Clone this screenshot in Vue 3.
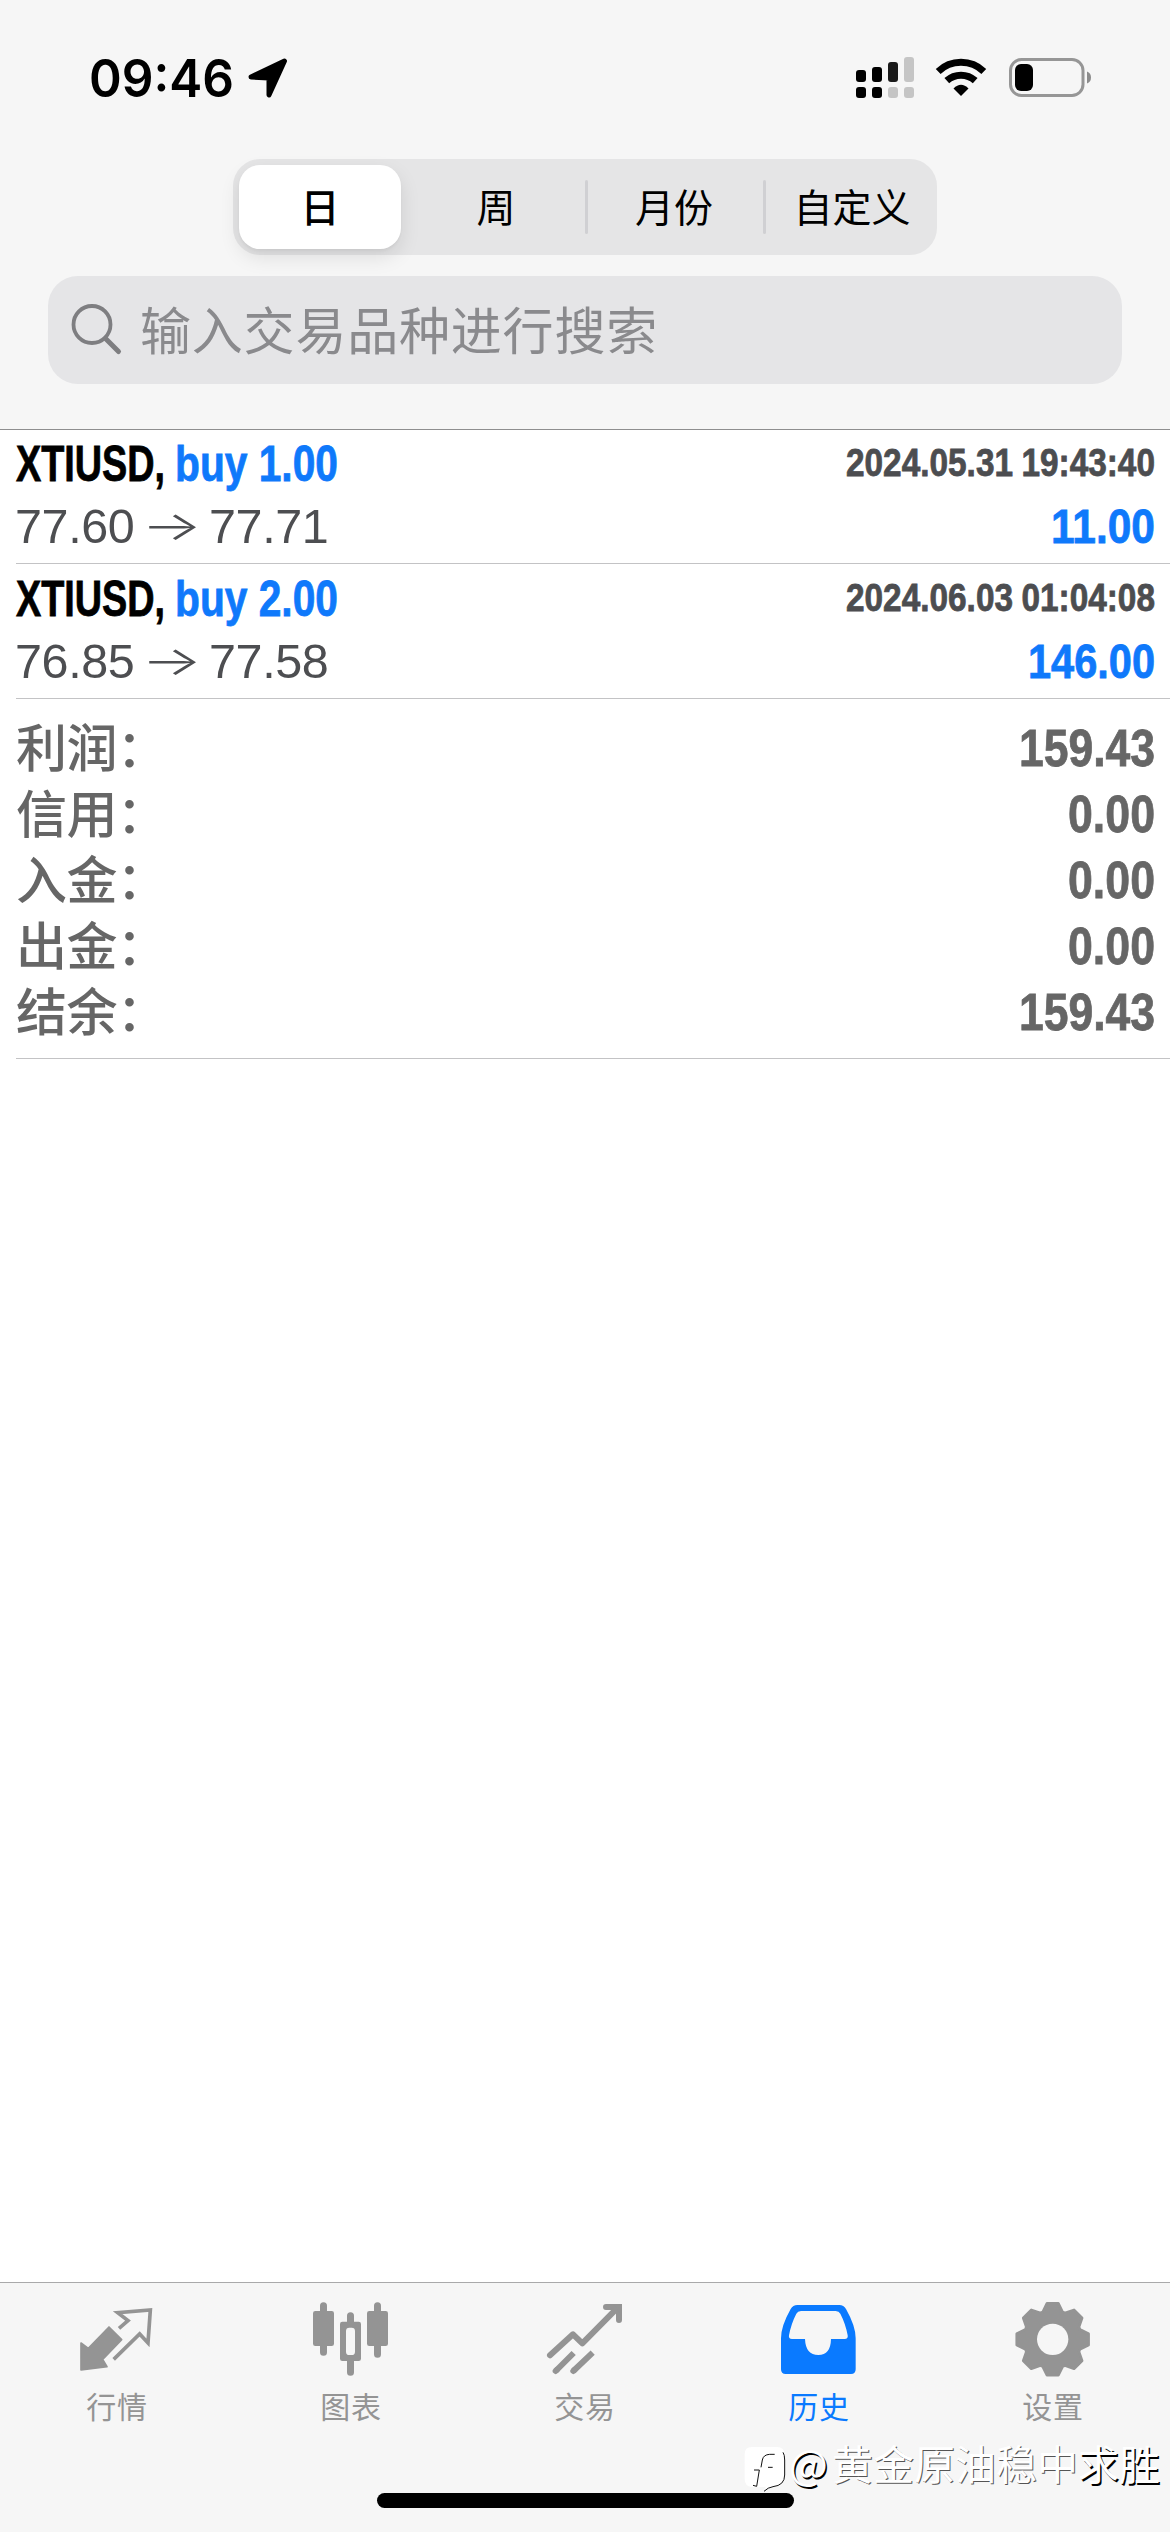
<script setup>
const periods = ['日', '周', '月份', '自定义']

const trades = [
  { symbol: 'XTIUSD,', side: 'buy 1.00', time: '2024.05.31 19:43:40', open: '77.60', close: '77.71', profit: '11.00', profitWidth: 104 },
  { symbol: 'XTIUSD,', side: 'buy 2.00', time: '2024.06.03 01:04:08', open: '76.85', close: '77.58', profit: '146.00', profitWidth: 127 },
]

const totals = [
  { label: '利润：', value: '159.43', width: 136 },
  { label: '信用：', value: '0.00', width: 87 },
  { label: '入金：', value: '0.00', width: 87 },
  { label: '出金：', value: '0.00', width: 87 },
  { label: '结余：', value: '159.43', width: 136 },
]

const polar = (radius, degrees) => {
  const a = (degrees * Math.PI) / 180
  return `${(338 + radius * Math.sin(a)).toFixed(1)},${(208 - radius * Math.cos(a)).toFixed(1)}`
}
const gearPoints = Array.from({ length: 8 }, (_, i) => i * 45)
  .flatMap((c) => [polar(87, c - 20), polar(109, c - 9), polar(109, c + 9), polar(87, c + 20)])
  .join(' ')
</script>

<template>
  <div class="screen">
    <header class="header">
      <div class="status">
        <svg class="clock" width="150" height="54" viewBox="0 50 150 54">
          <text x="0" y="96.500" textLength="145" lengthAdjust="spacingAndGlyphs">09:46</text>
        </svg>
        <svg class="location" width="42" height="54" viewBox="247 50 42 54">
          <path d="M251 77 L284.500 61 L269 95 V78 Z" fill="#000" stroke="#000" stroke-width="5" stroke-linejoin="round" />
        </svg>
        <svg class="signal" width="60" height="54" viewBox="855 50 60 54">
          <rect x="856" y="70" width="10" height="12" rx="3" />
          <rect x="872" y="67" width="10" height="15" rx="3" />
          <rect x="888" y="62" width="10" height="20" rx="3" fill="#1a1a1a" />
          <rect x="904" y="57" width="10" height="25" rx="3" fill="#c5c5c5" />
          <rect x="856" y="87" width="10" height="11" rx="3" />
          <rect x="872" y="87" width="10" height="11" rx="3" />
          <rect x="888" y="87" width="10" height="11" rx="3" fill="#c5c5c5" />
          <rect x="904" y="87" width="10" height="11" rx="3" fill="#c5c5c5" />
        </svg>
        <svg class="wifi" width="52" height="54" viewBox="935.5 50 52 54">
          <path d="M938.700 71.500 A33 33 0 0 1 984.300 71.500" fill="none" stroke="#000" stroke-width="7" />
          <path d="M947.300 80.700 A21 21 0 0 1 975.700 80.700" fill="none" stroke="#000" stroke-width="7" />
          <path d="M961.500 96 L954 88.500 Q961.500 81 969 88.500 Z" />
        </svg>
        <svg class="battery" width="84" height="54" viewBox="1008 50 84 54">
          <rect x="1010.500" y="59.500" width="72.500" height="36" rx="11" fill="none" stroke="#969696" stroke-width="3" />
          <rect x="1015" y="64" width="18" height="27" rx="6" />
          <path d="M1087 71.500 Q1091 73 1091 77.500 T1087 83.500 Z" fill="#8c8c8c" />
        </svg>
      </div>

      <nav class="segments">
        <button v-for="(p, i) in periods" :key="p" class="segment" :class="{ active: i === 0, divided: i > 1 }">{{ p }}</button>
      </nav>

      <div class="search">
        <svg width="52" height="52" viewBox="71 305 52 52">
          <circle cx="92" cy="325.500" r="18.500" fill="none" stroke="#7e7e81" stroke-width="3.800" />
          <path d="M105.500 339.500 L118.500 352.500" stroke="#7e7e81" stroke-width="5" stroke-linecap="round" />
        </svg>
        <span>输入交易品种进行搜索</span>
      </div>
    </header>

    <main class="content">
      <article v-for="t in trades" :key="t.time" class="trade">
        <div class="line title">
          <svg width="322" height="67">
            <text class="symbol" x="0" y="50.500" textLength="149" lengthAdjust="spacingAndGlyphs">{{ t.symbol }}</text>
            <text class="side" x="159" y="50.500" textLength="163" lengthAdjust="spacingAndGlyphs">{{ t.side }}</text>
          </svg>
          <svg width="310" height="67">
            <text class="time" x="1" y="46" textLength="309" lengthAdjust="spacingAndGlyphs">{{ t.time }}</text>
          </svg>
        </div>
        <div class="line">
          <div class="prices"><span>{{ t.open }}</span><span class="arrow">→</span><span>{{ t.close }}</span></div>
          <svg :width="t.profitWidth" height="66">
            <text class="profit" x="0" y="46" :textLength="t.profitWidth" lengthAdjust="spacingAndGlyphs">{{ t.profit }}</text>
          </svg>
        </div>
      </article>

      <section class="totals">
        <div v-for="row in totals" :key="row.label" class="total">
          <span class="label">{{ row.label }}</span>
          <svg :width="row.width" height="66">
            <text class="value" x="0" y="50" :textLength="row.width" lengthAdjust="spacingAndGlyphs">{{ row.value }}</text>
          </svg>
        </div>
      </section>
    </main>

    <footer class="tabbar">
      <div class="tab">
        <svg width="90" height="84" viewBox="96 84 270 252">
          <path d="M123 219 L145 235 L207 171 L245 209 L188 268 L201 290 L123 300 Z" fill="currentColor" stroke="currentColor" stroke-width="5" stroke-linejoin="round" />
          <path d="M237 175 L264 152 L233 128 L331 120 L324 219 L299 192 L221 268" fill="none" stroke="currentColor" stroke-width="11" />
        </svg>
        <span>行情</span>
      </div>
      <div class="tab">
        <svg width="90" height="84" viewBox="798 84 270 252">
          <g stroke="currentColor" stroke-width="21" stroke-linecap="round">
            <path d="M850.500 107 V247 M931.500 137 V160 M931.500 268 V307 M1012.500 107 V253" />
          </g>
          <rect x="819" y="123" width="63" height="105" rx="7" fill="currentColor" />
          <rect x="981" y="123" width="63" height="105" rx="7" fill="currentColor" />
          <rect x="918" y="173" width="27" height="82" rx="9" fill="#f6f6f6" />
          <path fill="currentColor" fill-rule="evenodd" d="M907 155 H956 Q963 155 963 162 V266 Q963 273 956 273 H907 Q900 273 900 266 V162 Q900 155 907 155 Z M928 173 Q918 173 918 183 V245 Q918 255 928 255 H935 Q945 255 945 245 V183 Q945 173 935 173 Z" />
        </svg>
        <span>图表</span>
      </div>
      <div class="tab">
        <svg width="90" height="84" viewBox="120 84 270 252">
          <path d="M150 256 L219 193 L247 220 L353 113" fill="none" stroke="currentColor" stroke-width="18" stroke-linecap="round" stroke-linejoin="round" />
          <path d="M318 111 H357 V150" fill="none" stroke="currentColor" stroke-width="18" stroke-linecap="round" />
          <path d="M340 104 H362 V130 Z" fill="currentColor" />
          <path d="M167 303 L221 249 M220 303 L278 248" stroke="currentColor" stroke-width="18" />
          <path d="M167 303 L170 300 M220 303 L223 300" stroke="currentColor" stroke-width="18" stroke-linecap="round" />
        </svg>
        <span>交易</span>
      </div>
      <div class="tab current">
        <svg width="90" height="84" viewBox="822 84 270 252">
          <path fill="currentColor" fill-rule="evenodd" d="M892 105 H1018 Q1031 105 1038 117 Q1067 168 1067 205 V298 Q1067 312 1053 312 H857 Q843 312 843 298 V205 Q843 168 872 117 Q879 105 892 105 Z M903 123 Q893 123 889 131 Q873 162 867 196 Q865 207 876 207 H915 Q917 255 955 255 Q992 255 993 207 H1034 Q1045 207 1043 196 Q1037 162 1021 131 Q1017 123 1007 123 Z" />
        </svg>
        <span>历史</span>
      </div>
      <div class="tab">
        <svg width="90" height="84" viewBox="204 84 270 252">
          <polygon :points="gearPoints" fill="currentColor" stroke="currentColor" stroke-width="8" stroke-linejoin="round" />
          <circle cx="338" cy="208" r="47" fill="#f6f6f6" />
        </svg>
        <span>设置</span>
      </div>
    </footer>
    <div class="home"></div>

    <div class="watermark">
      <svg width="46" height="50" viewBox="70 75 138 150">
        <path d="M97 81 H172 Q195 81 195 106 V165 Q195 196 160 200 Q145 202 133 214 L138 201 H97 Q75 200 75 178 V103 Q75 81 97 81 Z" fill="#fff" />
        <path d="M190 97 Q195 104 195 120 V165 Q195 196 160 200 Q145 202 133 214 M165 103 H150 Q131 104 128 120 L124 142 M103 150 H119 M145 142 H159 M119 150 L111 199 L100 196" fill="none" stroke="#111" stroke-width="3" />
      </svg>
      <span class="at">@</span><span class="soft">黄金原油稳中</span><span class="strong">求胜</span>
    </div>
  </div>
</template>

<style>
body {
  margin: 0;
  background: #fff;
}
</style>

<style scoped>
.screen {
  position: relative;
  display: flex;
  flex-direction: column;
  width: 1170px;
  height: 2532px;
  overflow: hidden;
  background: #fff;
  font-family: "Liberation Sans", "Noto Sans CJK SC", sans-serif;
}
svg {
  display: block;
  flex: none;
  overflow: visible;
}
.header {
  box-sizing: border-box;
  height: 430px;
  background: #f6f6f6;
  border-bottom: 1px solid #8e8e8f;
}
.status {
  box-sizing: border-box;
  display: flex;
  height: 159px;
  padding: 50px 78px 0 89px;
}
.clock text {
  font: 600 52px Inter, sans-serif;
}
.location {
  margin-left: 8px;
}
.signal {
  margin-left: auto;
}
.wifi {
  margin-left: 20px;
}
.battery {
  margin-left: 21px;
}
.segments {
  box-sizing: border-box;
  display: flex;
  width: 704px;
  height: 96px;
  margin-left: 233px;
  padding: 6px 2px 6px 6px;
  border-radius: 27px;
  background: #e5e5e6;
}
.segment {
  position: relative;
  flex: 1;
  height: 84px;
  margin: 0 0 0 12px;
  padding: 0 0 5px;
  border: 0;
  border-radius: 21px;
  background: none;
  color: #000;
  font: 400 39px/78px "Noto Sans CJK SC", sans-serif;
}
.segment.active {
  flex: 0 0 162px;
  margin-left: 0;
  background: #fff;
  font-weight: 500;
  box-shadow: 0 8px 20px rgba(0, 0, 0, 0.1), 0 2px 3px rgba(0, 0, 0, 0.04);
}
.segment.divided::before {
  content: "";
  position: absolute;
  left: -6px;
  top: 15px;
  width: 3px;
  height: 54px;
  border-radius: 2px;
  background: #d0d0d3;
}
.search {
  box-sizing: border-box;
  display: flex;
  align-items: center;
  height: 108px;
  margin: 21px 48px 0;
  padding-left: 23px;
  border-radius: 30px;
  background: #e5e5e7;
  color: #8a8a8d;
  font: 400 51px/104px "Noto Sans CJK SC", sans-serif;
  letter-spacing: 0.8px;
}
.search span {
  height: 108px;
  margin-left: 17px;
}
.trade {
  box-sizing: border-box;
  height: 135px;
  margin-left: 16px;
  padding-right: 15px;
  border-bottom: 1px solid #c3c3c5;
}
.trade:first-child {
  height: 134px;
}
.line {
  display: flex;
  justify-content: space-between;
}
.trade + .trade .line.title {
  padding-top: 1px;
}
.symbol, .side, .time, .profit, .value {
  font: 700 50px "Liberation Sans", sans-serif;
  stroke-width: 0.8px;
}
.symbol {
  fill: #000;
  stroke: #000;
}
.side, .profit {
  fill: #0f79fb;
  stroke: #0f79fb;
}
.time {
  font-size: 39.500px;
  word-spacing: -1px;
  fill: #4c4d50;
  stroke: #4c4d50;
}
.profit {
  font-size: 49px;
}
.value {
  font-size: 52px;
  fill: #666;
  stroke: #666;
}
.prices {
  display: flex;
  height: 66px;
  color: #4d4e51;
  font-size: 48.500px;
  line-height: 58px;
  letter-spacing: -0.4px;
}
.prices span:first-child {
  width: 119px;
  margin-left: -1px;
}
.arrow {
  width: 75px;
  text-align: center;
  font-family: Inter, sans-serif;
  font-size: 40px;
  font-weight: 300;
  transform: scaleX(1.6);
}
.totals {
  box-sizing: border-box;
  height: 360px;
  margin-left: 16px;
  padding: 17px 15px 0 0;
  border-bottom: 1px solid #c3c3c5;
}
.total {
  display: flex;
  justify-content: space-between;
  height: 66px;
}
.label {
  color: #666;
  font: 500 51px/58px "Noto Sans CJK SC", sans-serif;
  letter-spacing: -0.6px;
}
.tabbar {
  box-sizing: border-box;
  display: flex;
  height: 250px;
  margin-top: auto;
  padding-top: 15px;
  border-top: 1px solid #a9a9aa;
  background: #f6f6f6;
}
.tab {
  display: flex;
  flex: 1;
  flex-direction: column;
  align-items: center;
  color: #949494;
  font: 400 30px/46px "Noto Sans CJK SC", sans-serif;
  letter-spacing: 0.8px;
}
.tab.current {
  color: #0a7aff;
}
.home {
  position: absolute;
  left: 377px;
  top: 2493px;
  width: 417px;
  height: 15px;
  border-radius: 8px;
  background: #000;
}
.watermark {
  position: absolute;
  left: 743px;
  top: 2445px;
  display: flex;
  height: 50px;
  color: #fff;
  font: 400 41px/34px "Noto Sans CJK SC", sans-serif;
  white-space: nowrap;
}
.at {
  width: 43px;
  text-shadow: 1.500px 1.500px 0 #000;
}
.soft {
  text-shadow: 1px 1px 0 #555;
}
.strong {
  text-shadow: 1.500px 1.500px 0 #000;
}
</style>
